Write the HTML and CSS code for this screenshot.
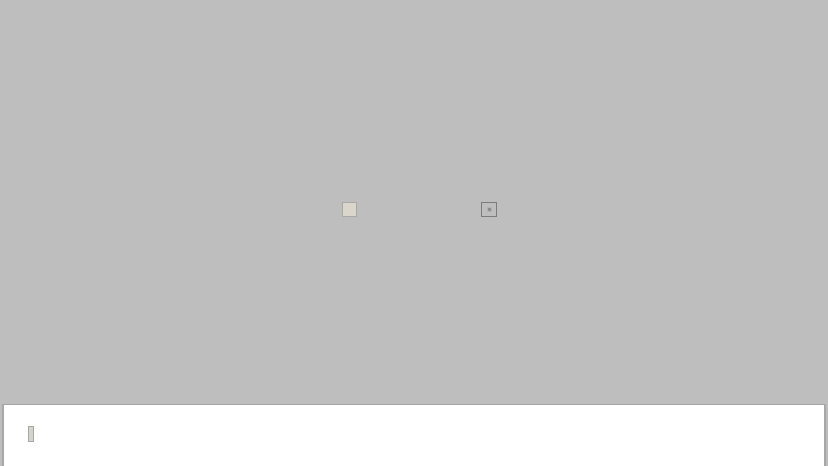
FILE: index.html
```html
<!DOCTYPE html>
<html>
<head>
<meta charset="utf-8">
<link rel="stylesheet" href="styles.css">
</head>
<body>
<div class="stage">
  <div class="canvas">
    <div class="box-light"></div>
    <div class="box-dark"><span class="inner"><span class="dot"></span></span></div>
  </div>
  <div class="panel">
    <div class="caret"></div>
  </div>
</div>
</body>
</html>
```
FILE: styles.css
```css
html, body {
  margin: 0;
  padding: 0;
  width: 828px;
  height: 466px;
  overflow: hidden;
  background: #bebebe;
  font-family: "Liberation Sans", Arial, sans-serif;
}
.stage {
  display: flex;
  flex-direction: column;
  width: 828px;
  height: 466px;
}
.canvas {
  height: 404px;
  display: flex;
  align-items: flex-start;
  padding-top: 202px;
  padding-left: 342px;
  box-sizing: border-box;
  gap: 124px;
}
.box-light {
  width: 13px;
  height: 13px;
  background: #dad6cc;
  border: 1px solid #a9a8a2;
}
.box-dark {
  width: 14px;
  height: 13px;
  border: 1px solid #7c7c7c;
  display: flex;
  align-items: center;
  justify-content: center;
}
.inner {
  width: 5px;
  height: 5px;
  background: #b2b2b2;
  display: flex;
  align-items: center;
  justify-content: center;
}
.dot {
  width: 3px;
  height: 3px;
  background: #8e8e8e;
}
.panel {
  margin: 0 2px;
  flex: 1;
  background: #ffffff;
  border: 2px solid #a8a8a8;
  border-top: 1px solid #a4a4a4;
  border-bottom: none;
  box-sizing: border-box;
  padding: 21px 0 0 24px;
}
.caret {
  width: 4px;
  height: 14px;
  background: #d4d4cc;
  border: 1px solid #a8a8a0;
}
```
